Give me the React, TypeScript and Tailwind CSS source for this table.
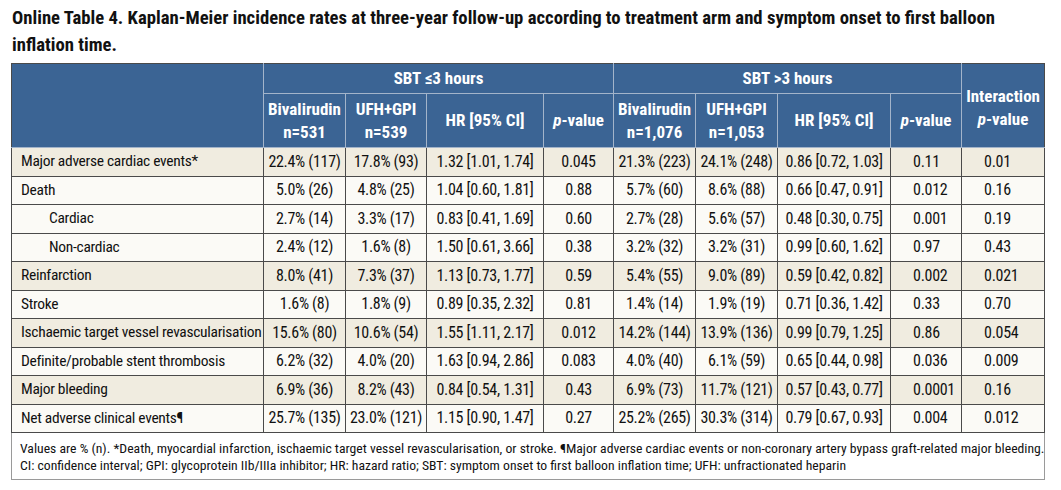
import React from "react";

type Row = { label: string; vals: string[]; beige: boolean; indent?: boolean };

const rows: Row[] = [
  { label: "Major adverse cardiac events*", vals: ["22.4% (117)", "17.8% (93)", "1.32 [1.01, 1.74]", "0.045", "21.3% (223)", "24.1% (248)", "0.86 [0.72, 1.03]", "0.11", "0.01"], beige: true },
  { label: "Death", vals: ["5.0% (26)", "4.8% (25)", "1.04 [0.60, 1.81]", "0.88", "5.7% (60)", "8.6% (88)", "0.66 [0.47, 0.91]", "0.012", "0.16"], beige: false },
  { label: "Cardiac", indent: true, vals: ["2.7% (14)", "3.3% (17)", "0.83 [0.41, 1.69]", "0.60", "2.7% (28)", "5.6% (57)", "0.48 [0.30, 0.75]", "0.001", "0.19"], beige: false },
  { label: "Non-cardiac", indent: true, vals: ["2.4% (12)", "1.6% (8)", "1.50 [0.61, 3.66]", "0.38", "3.2% (32)", "3.2% (31)", "0.99 [0.60, 1.62]", "0.97", "0.43"], beige: false },
  { label: "Reinfarction", vals: ["8.0% (41)", "7.3% (37)", "1.13 [0.73, 1.77]", "0.59", "5.4% (55)", "9.0% (89)", "0.59 [0.42, 0.82]", "0.002", "0.021"], beige: true },
  { label: "Stroke", vals: ["1.6% (8)", "1.8% (9)", "0.89 [0.35, 2.32]", "0.81", "1.4% (14)", "1.9% (19)", "0.71 [0.36, 1.42]", "0.33", "0.70"], beige: false },
  { label: "Ischaemic target vessel revascularisation", vals: ["15.6% (80)", "10.6% (54)", "1.55 [1.11, 2.17]", "0.012", "14.2% (144)", "13.9% (136)", "0.99 [0.79, 1.25]", "0.86", "0.054"], beige: true },
  { label: "Definite/probable stent thrombosis", vals: ["6.2% (32)", "4.0% (20)", "1.63 [0.94, 2.86]", "0.083", "4.0% (40)", "6.1% (59)", "0.65 [0.44, 0.98]", "0.036", "0.009"], beige: false },
  { label: "Major bleeding", vals: ["6.9% (36)", "8.2% (43)", "0.84 [0.54, 1.31]", "0.43", "6.9% (73)", "11.7% (121)", "0.57 [0.43, 0.77]", "0.0001", "0.16"], beige: true },
  { label: "Net adverse clinical events¶", vals: ["25.7% (135)", "23.0% (121)", "1.15 [0.90, 1.47]", "0.27", "25.2% (265)", "30.3% (314)", "0.79 [0.67, 0.93]", "0.004", "0.012"], beige: false },
];

const H = "border border-[#a3b4ca] font-bold";

export default function App() {
  return (
    <div className="w-[1061px] h-[490px] bg-white text-[#111] overflow-hidden font-['Roboto',sans-serif]">
      <div className="pl-[12px] pt-[5px] text-[18.7px] leading-[27px] font-bold font-stretch-[85.5%] whitespace-nowrap">
        Online Table 4. Kaplan-Meier incidence rates at three-year follow-up according to treatment arm and symptom onset to first balloon
        <br />
        inflation time.
      </div>
      <table className="ml-[11px] mt-[4px] w-[1033px] table-fixed border-collapse text-[16px] font-stretch-[75%]">
        <colgroup>
          <col className="w-[252px]" />
          <col className="w-[82px]" />
          <col className="w-[81px]" />
          <col className="w-[117px]" />
          <col className="w-[70px]" />
          <col className="w-[82px]" />
          <col className="w-[82px]" />
          <col className="w-[113px]" />
          <col className="w-[71px]" />
          <col className="w-[83px]" />
        </colgroup>
        <thead className="bg-[#3b6494] text-white text-[17px] leading-[23px] font-stretch-[78%]">
          <tr className="h-[30px]">
            <th rowSpan={2} className={H + " border-t-[#4a4a4a] border-l-[#4a4a4a]"} />
            <th colSpan={4} className={H + " border-t-[#4a4a4a]"}>SBT ≤3 hours</th>
            <th colSpan={4} className={H + " border-t-[#4a4a4a]"}>SBT &gt;3 hours</th>
            <th rowSpan={2} className={H + " border-t-[#4a4a4a] border-r-[#4a4a4a] pt-[4px]"}>
              Interaction
              <br />
              <i>p</i>-value
            </th>
          </tr>
          <tr className="h-[54px]">
            <th className={H}>Bivalirudin<br />n=531</th>
            <th className={H}>UFH+GPI<br />n=539</th>
            <th className={H}>HR [95% CI]</th>
            <th className={H}><i>p</i>-value</th>
            <th className={H}>Bivalirudin<br />n=1,076</th>
            <th className={H}>UFH+GPI<br />n=1,053</th>
            <th className={H}>HR [95% CI]</th>
            <th className={H}><i>p</i>-value</th>
          </tr>
        </thead>
        <tbody>
          {rows.map((r) => (
            <tr key={r.label} className={r.beige ? "h-[28.5px] bg-[#f0ece0]" : "h-[28.5px] bg-[#fbfaf6]"}>
              <td
                className={
                  r.indent
                    ? "border border-[#4a4a4a] pl-[37px] whitespace-nowrap text-[15.5px] tracking-[-0.3px]"
                    : "border border-[#4a4a4a] pl-[9px] whitespace-nowrap text-[15.5px] tracking-[-0.3px]"
                }
              >
                {r.label}
              </td>
              {r.vals.map((v, i) => (
                <td
                  key={i}
                  className={
                    i === 7 || i === 8
                      ? "border border-[#4a4a4a] border-l-[#8a8a8a] pl-[22px] whitespace-nowrap tracking-[-0.3px]"
                      : "border border-[#4a4a4a] border-l-[#8a8a8a] text-center whitespace-nowrap tracking-[-0.3px]"
                  }
                >
                  {v}
                </td>
              ))}
            </tr>
          ))}
          <tr>
            <td colSpan={10} className="border border-[#9a9a9a] border-t-[#4a4a4a] bg-white pl-[8px] pt-[7px] pb-[5px] text-[13.7px] leading-[17px] whitespace-nowrap">
              Values are % (n). *Death, myocardial infarction, ischaemic target vessel revascularisation, or stroke. ¶Major adverse cardiac events or non-coronary artery bypass graft-related major bleeding.
              <br />
              CI: confidence interval; GPI: glycoprotein IIb/IIIa inhibitor; HR: hazard ratio; SBT: symptom onset to first balloon inflation time; UFH: unfractionated heparin
            </td>
          </tr>
        </tbody>
      </table>
    </div>
  );
}
